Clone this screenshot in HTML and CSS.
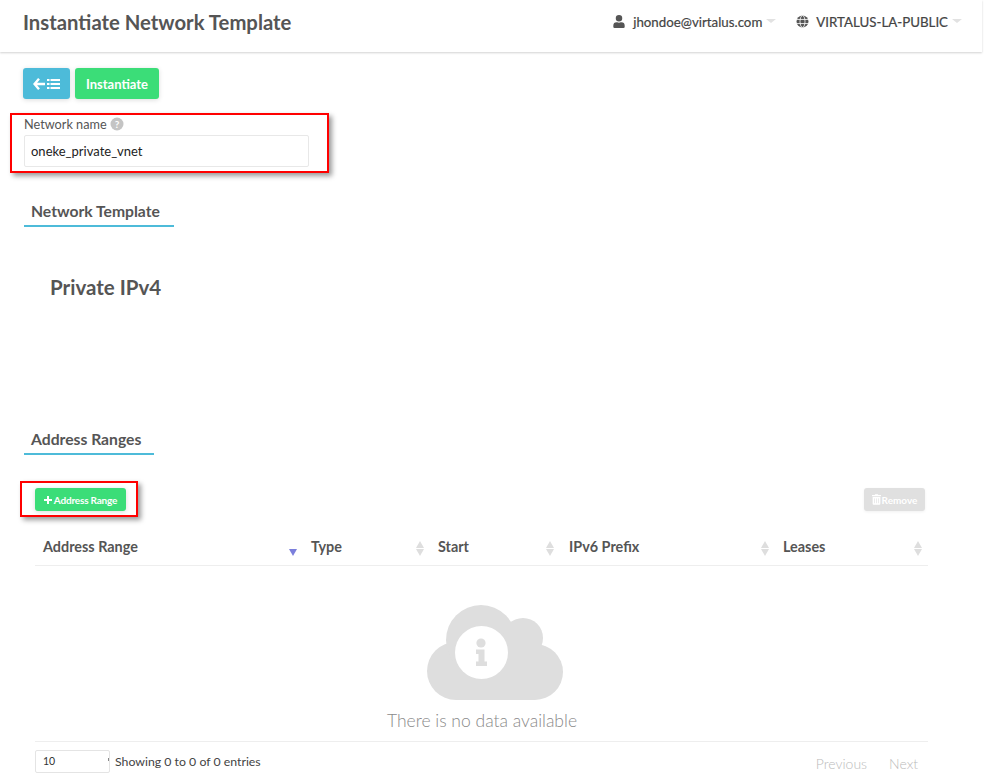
FILE: index.html
```html
<!DOCTYPE html>
<html lang="en">
<head>
<meta charset="utf-8">
<title>Instantiate Network Template</title>
<link rel="stylesheet" href="styles.css">
</head>
<body>
<div class="page">
  <header class="topbar">
    <h1 class="title">Instantiate Network Template</h1>
    <nav class="topnav">
      <span class="navitem">
        <svg class="navicon" viewBox="0 0 448 512"><path fill="currentColor" d="M224 256a128 128 0 1 0 0-256 128 128 0 0 0 0 256zm90 32h-17a174 174 0 0 1-146 0h-17A134 134 0 0 0 0 422v42a48 48 0 0 0 48 48h352a48 48 0 0 0 48-48v-42a134 134 0 0 0-134-134z"/></svg>
        <span>jhondoe@virtalus.com</span><i class="caret"></i>
      </span>
      <span class="navitem">
        <svg class="navicon globe" viewBox="0 0 24 24"><circle cx="12" cy="12" r="11" fill="currentColor"/><g fill="none" stroke="#fff" stroke-width="1.5"><ellipse cx="12" cy="12" rx="4.6" ry="11"/><path d="M1 8.2h22M1 15.8h22"/></g></svg>
        <span>VIRTALUS-LA-PUBLIC</span><i class="caret"></i>
      </span>
    </nav>
  </header>

  <main class="content">
    <div class="actions">
      <button class="btn btn-info" type="button" aria-label="Back to list">
        <svg class="backicon" viewBox="0 0 27 12"><path d="M6 .8 1.500 6 6 11.200M2 6h10" fill="none" stroke="#fff" stroke-width="2.400"/><path d="M14 2h2.500M14 6h2.500M14 10h2.500M17.500 2H27M17.500 6H27M17.500 10H27" fill="none" stroke="#fff" stroke-width="2"/></svg>
      </button>
      <button class="btn btn-success" type="button">Instantiate</button>
    </div>

    <div class="highlight name-box">
      <label class="field-label" for="netname">Network name<svg class="help" viewBox="0 0 14 14"><circle cx="7" cy="7" r="6.500" fill="#c4c4c4"/><text x="7" y="10.600" text-anchor="middle" class="help-q">?</text></svg></label>
      <input class="field-input" id="netname" type="text" value="oneke_private_vnet">
    </div>

    <h2 class="section section-template">Network Template</h2>
    <h3 class="subtitle">Private IPv4</h3>
    <h2 class="section section-ranges">Address Ranges</h2>

    <div class="table-tools">
      <div class="highlight add-box">
        <button class="btn btn-small btn-success" type="button"><svg class="plus" viewBox="0 0 8 8"><path d="M4 0v8M0 4h8" stroke="#fff" stroke-width="2"/></svg>Address Range</button>
      </div>
      <button class="btn btn-small btn-disabled" type="button">
        <svg class="trash" viewBox="0 0 448 512"><path fill="currentColor" d="M32 464a48 48 0 0 0 48 48h288a48 48 0 0 0 48-48V128H32zm272-256a16 16 0 0 1 32 0v224a16 16 0 0 1-32 0zm-96 0a16 16 0 0 1 32 0v224a16 16 0 0 1-32 0zm-96 0a16 16 0 0 1 32 0v224a16 16 0 0 1-32 0zM432 32H312l-9-19a24 24 0 0 0-22-13H167a24 24 0 0 0-21 13l-9 19H16A16 16 0 0 0 0 48v32a16 16 0 0 0 16 16h416a16 16 0 0 0 16-16V48a16 16 0 0 0-16-16z"/></svg>Remove
      </button>
    </div>

    <div class="table">
      <div class="thead">
        <div class="th col-range">Address Range<i class="sort sort-active"></i></div>
        <div class="th col-type">Type<i class="sort"></i></div>
        <div class="th col-start">Start<i class="sort"></i></div>
        <div class="th col-prefix">IPv6 Prefix<i class="sort"></i></div>
        <div class="th col-leases">Leases<i class="sort"></i></div>
      </div>
      <div class="empty">
        <svg class="cloud" viewBox="0 0 136 95">
          <g fill="#dedede"><circle cx="29" cy="66" r="29"/><circle cx="54" cy="35" r="35"/><circle cx="96" cy="33" r="20"/><circle cx="108" cy="67" r="28"/><rect x="29" y="35" width="79" height="60"/></g>
          <circle cx="54.500" cy="47.500" r="26.500" fill="#fff"/>
          <g fill="#dedede"><circle cx="54" cy="38" r="4.600"/><path d="M49 44.500h8.500v12H60v4.500H49v-4.500h2.500V49H49z"/></g>
        </svg>
        <p class="empty-text">There is no data available</p>
      </div>
      <div class="tfoot">
        <div class="tfoot-left">
          <span class="pagesize">10<i class="pagesize-arrow"></i></span>
          <span class="info">Showing 0 to 0 of 0 entries</span>
        </div>
        <div class="pager"><span>Previous</span><span>Next</span></div>
      </div>
    </div>
  </main>
</div>
</body>
</html>
```
FILE: styles.css
```css
* { box-sizing: border-box; }
html, body { margin: 0; padding: 0; background: #fff; }
body { font-family: Lato, "Liberation Sans", sans-serif; color: #555; height: 779px; overflow: hidden; }
.page { width: 982px; }

.topbar {
  height: 52px; display: flex; align-items: center; justify-content: space-between;
  padding: 0 20px 8px 23px; background: #fff;
  box-shadow: 0 1px 2px rgba(0,0,0,.18);
}
.title { margin: 0; font-size: 20.300px; font-weight: 700; color: #555; line-height: 1; }
.topnav { display: flex; gap: 20px; margin-top: -1px; }
.navitem { display: flex; align-items: center; font-size: 13.300px; font-weight: 400; color: #444; -webkit-text-stroke: .2px #444; }
.navicon { width: 12px; height: 13px; margin-right: 8px; color: #555; }
.globe { width: 13px; margin-right: 7px; }
.caret { width: 0; height: 0; margin-left: 4px; margin-top: -1px; border-left: 5px solid transparent; border-right: 5px solid transparent; border-top: 4px solid #e2e2e2; }

.content { padding: 16px 0 0 23px; }
.actions { display: flex; gap: 5px; }
.btn { border: 0; border-radius: 3px; color: #fff; font-family: inherit; font-weight: 700; cursor: pointer; padding: 0; box-shadow: 0 1px 5px rgba(0,0,0,.14); }
.actions .btn { height: 31px; font-size: 13px; }
.btn-info { width: 47px; background: #4dbbd9; display: flex; align-items: center; justify-content: center; }
.backicon { width: 27px; height: 12px; }
.btn-success { background: #3bdd78; }
.actions .btn-success { width: 84px; }

.highlight { border: 2px solid #f00; box-shadow: 3px 3px 5px rgba(0,0,0,.4); background: #fff; }
.name-box { width: 319px; height: 60px; margin: 14px 0 0 -13px; padding: 2px 0 0 12px; }
.field-label { display: block; height: 18px; font-size: 12.700px; line-height: 15px; color: #555; }
.help { width: 14px; height: 14px; margin-left: 3px; vertical-align: -2px; }
.help-q { fill: #fff; font-size: 10px; font-weight: 700; font-family: Lato, sans-serif; }
.field-input { display: block; width: 285px; height: 32px; border: 1px solid #e8e8e8; border-radius: 2px; padding: 0 6px; font-family: inherit; font-size: 13px; color: #222; background: #fff; outline: 0; }

.section { margin: 0 0 0 1px; width: 150px; font-size: 15.700px; font-weight: 700; color: #555; line-height: 18px; padding: 0 0 5px 7px; border-bottom: 2px solid #4dbbd9; }
.section-template { margin-top: 29px; height: 25px; }
.subtitle { margin: 47px 0 0 27px; font-size: 20.500px; line-height: 26px; font-weight: 700; color: #555; }
.section-ranges { margin-top: 130px; width: 130px; height: 25px; }

.table-tools { display: flex; justify-content: space-between; align-items: flex-start; width: 905px; margin-top: 26px; margin-left: -3px; }
.add-box { width: 118px; height: 36px; padding: 5px 0 0 13px; }
.btn-small { height: 23px; font-size: 10px; }
.add-box .btn-small { width: 91px; display: flex; align-items: center; justify-content: center; letter-spacing: -.2px; }
.plus { width: 8px; height: 8px; margin-right: 2px; }
.btn-disabled { width: 61px; margin-top: 7px; background: #e0e0e0; display: flex; align-items: center; justify-content: center; box-shadow: 0 1px 3px rgba(0,0,0,.06); }
.trash { width: 9px; height: 11px; margin-right: 1px; }

.table { width: 893px; margin-left: 12px; }
.thead { display: flex; height: 49px; border-bottom: 1px solid #eee; }
.th { position: relative; display: flex; align-items: center; height: 48px; padding: 10px 0 0 8px; font-size: 14.400px; font-weight: 700; color: #555; }
.col-range { width: 268px; }
.col-type { width: 127px; }
.col-start { width: 131px; }
.col-prefix { width: 214px; }
.col-leases { width: 153px; }
.sort { position: absolute; right: 6px; top: 24px; width: 9px; height: 15px; }
.sort::before, .sort::after { content: ""; position: absolute; left: 0; width: 0; height: 0; border-left: 4.500px solid transparent; border-right: 4.500px solid transparent; }
.sort::before { top: 0; border-bottom: 7px solid #dedede; }
.sort::after { top: 8px; border-top: 7px solid #dedede; }
.sort-active::before { display: none; }
.sort-active::after { top: 8px; border-top: 7px solid #7b7fdc; }
.col-range .sort { right: 5px; }
.col-type .sort { right: 5px; }
.col-start .sort { right: 6px; }
.col-prefix .sort { right: 5px; }
.col-leases .sort { right: 5px; }

.empty { height: 175px; display: flex; flex-direction: column; align-items: center; padding-top: 39px; margin-left: 1px; }
.cloud { width: 136px; height: 95px; display: block; margin-left: 26px; }
.empty-text { margin: 10px 0 0; font-size: 17.500px; line-height: 22px; font-weight: 300; color: #8a8a8a; }

.tfoot { display: flex; justify-content: space-between; align-items: flex-start; border-top: 1px solid #eee; padding-top: 8px; }
.tfoot-left { display: flex; align-items: center; }
.pagesize { position: relative; width: 75px; height: 23px; border: 1px solid #e4e4e4; border-radius: 2px; font-size: 10.500px; line-height: 21px; padding-left: 7px; color: #333; }
.pagesize-arrow { position: absolute; right: 0; top: 7px; width: 1px; height: 3px; background: #888; }
.info { margin-left: 5px; font-size: 12.300px; color: #444; }
.pager { display: flex; gap: 22px; padding-right: 10px; font-size: 14px; font-weight: 300; color: #bbb; line-height: 27px; }
```
